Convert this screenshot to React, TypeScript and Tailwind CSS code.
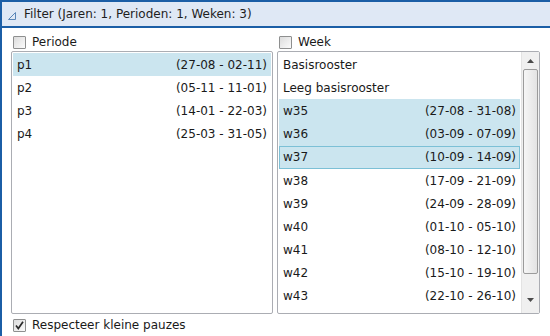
import React from 'react';

const periodes = [
  { code: 'p1', range: '(27-08 - 02-11)', selected: true },
  { code: 'p2', range: '(05-11 - 11-01)' },
  { code: 'p3', range: '(14-01 - 22-03)' },
  { code: 'p4', range: '(25-03 - 31-05)' },
];

const weken: { code: string; range?: string; selected?: boolean; focused?: boolean }[] = [
  { code: 'Basisrooster' },
  { code: 'Leeg basisrooster' },
  { code: 'w35', range: '(27-08 - 31-08)', selected: true },
  { code: 'w36', range: '(03-09 - 07-09)', selected: true },
  { code: 'w37', range: '(10-09 - 14-09)', selected: true, focused: true },
  { code: 'w38', range: '(17-09 - 21-09)' },
  { code: 'w39', range: '(24-09 - 28-09)' },
  { code: 'w40', range: '(01-10 - 05-10)' },
  { code: 'w41', range: '(08-10 - 12-10)' },
  { code: 'w42', range: '(15-10 - 19-10)' },
  { code: 'w43', range: '(22-10 - 26-10)' },
];

function Checkbox({ checked, label, className = '' }: { checked?: boolean; label: string; className?: string }) {
  return (
    <div className={`flex items-center pl-[2px] ${className}`}>
      <span className="relative w-[13px] h-[13px] shrink-0 border border-[#8e8f8f] bg-gradient-to-br from-[#dcdcdc] to-[#fbfbfb] rounded-[1px]">
        {checked && (
          <svg viewBox="0 0 13 13" className="absolute -left-px -top-px w-[13px] h-[13px]">
            <path d="M3 6.5 L5.3 9.5 L10 2.8" fill="none" stroke="#2a2a2a" strokeWidth="1.7" />
          </svg>
        )}
      </span>
      <span className="ml-[6px] text-[12px] text-[#1a1a1a]">{label}</span>
    </div>
  );
}

function Row({ code, range, selected, focused }: { code: string; range?: string; selected?: boolean; focused?: boolean }) {
  return (
    <div
      className={`flex items-center justify-between h-[23.2px] px-[3px] text-[12px] text-[#1a1a1a] border ${
        selected ? 'bg-[#cbe5ef]' : ''
      } ${focused ? 'border-[#7cc0d6]' : 'border-transparent'}`}
    >
      <span>{code}</span>
      {range && <span>{range}</span>}
    </div>
  );
}

export default function App() {
  return (
    <div
      className="w-[550px] h-[336px] flex flex-col bg-white border-l-2 border-[#1b5ea6] overflow-hidden"
      style={{ fontFamily: '"DejaVu Sans", sans-serif' }}
    >
      <div className="h-[28px] shrink-0 flex items-center bg-[#dfe8f5] border-t-2 border-b-2 border-[#1b5ea6] pl-[6px]">
        <svg viewBox="0 0 8 8" className="w-[8px] h-[8px] mt-[3px]">
          <path d="M7.5 0.5 L7.5 7.5 L0.5 7.5 Z" fill="none" stroke="#5a86b8" strokeWidth="1" />
        </svg>
        <span className="ml-[8px] text-[12px] text-[#1e1e1e]">Filter (Jaren: 1, Perioden: 1, Weken: 3)</span>
      </div>

      <div className="flex gap-[4px] pl-[9px] pr-[10px]">
        <div className="w-[262px] flex flex-col">
          <Checkbox label="Periode" className="h-[14px] mt-[7px] mb-[2px]" />
          <div className="h-[263px] border border-[#abadb3] rounded-[2px] p-px">
            {periodes.map((p) => (
              <Row key={p.code} {...p} />
            ))}
          </div>
        </div>

        <div className="w-[263px] flex flex-col">
          <Checkbox label="Week" className="h-[14px] mt-[7px] mb-[2px]" />
          <div className="h-[263px] border border-[#abadb3] rounded-[2px] flex">
            <div className="flex-1 p-px">
              {weken.map((w) => (
                <Row key={w.code} {...w} />
              ))}
            </div>
            <div className="w-[18px] flex flex-col items-center bg-[#f0f0f0] border-l border-[#e3e3e3]">
              <div className="h-[17px] flex items-center justify-center">
                <svg viewBox="0 0 7 4" className="w-[7px] h-[4px]">
                  <path d="M0 4 L3.5 0 L7 4 Z" fill="#4a4a4a" />
                </svg>
              </div>
              <div className="w-[15px] h-[205px] border border-[#9b9b9b] rounded-[2px] bg-gradient-to-r from-[#f6f6f6] to-[#e3e3e3]" />
              <div className="flex-1 flex items-center justify-center pt-[12px]">
                <svg viewBox="0 0 7 4" className="w-[7px] h-[4px]">
                  <path d="M0 0 L3.5 4 L7 0 Z" fill="#4a4a4a" />
                </svg>
              </div>
            </div>
          </div>
        </div>
      </div>

      <div className="pl-[9px]">
        <Checkbox checked label="Respecteer kleine pauzes" className="h-[22px]" />
      </div>
    </div>
  );
}
